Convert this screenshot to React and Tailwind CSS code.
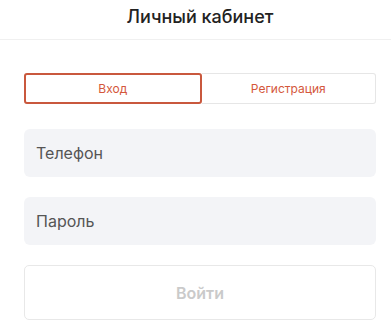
export default function App() {
  return (
    <div className="min-h-screen w-[400px] bg-white" style={{ fontFamily: "Inter, 'Noto Sans', sans-serif" }}>
      <header className="h-[40px] border-b border-[#f0f0f0] flex items-center justify-center">
        <h1 className="text-[18px] font-medium text-[#222] -mt-[6px]">Личный кабинет</h1>
      </header>

      <main className="px-6 pt-[33px]">
        <div className="flex h-[31px]">
          <button className="flex-1 border-2 border-[#c9583d] rounded-[3px] text-[12px] text-[#d4573b]">
            Вход
          </button>
          <button className="flex-1 border border-l-0 border-[#e6e6e6] rounded-r-[3px] text-[12px] text-[#d4573b]">
            Регистрация
          </button>
        </div>

        <div className="mt-[25px] flex flex-col gap-[20px]">
          <input
            type="text"
            placeholder="Телефон"
            className="h-[48px] w-full px-3 bg-[#f3f4f7] rounded-[6px] text-[16px] text-[#333] placeholder-[#555] outline-none"
          />
          <input
            type="password"
            placeholder="Пароль"
            className="h-[48px] w-full px-3 bg-[#f3f4f7] rounded-[6px] text-[16px] text-[#333] placeholder-[#555] outline-none"
          />
        </div>

        <button
          disabled
          className="mt-[20px] w-full h-[55px] border border-[#e8e8e8] rounded-[5px] text-[16px] font-semibold text-[#cacaca]"
        >
          Войти
        </button>
      </main>
    </div>
  );
}
